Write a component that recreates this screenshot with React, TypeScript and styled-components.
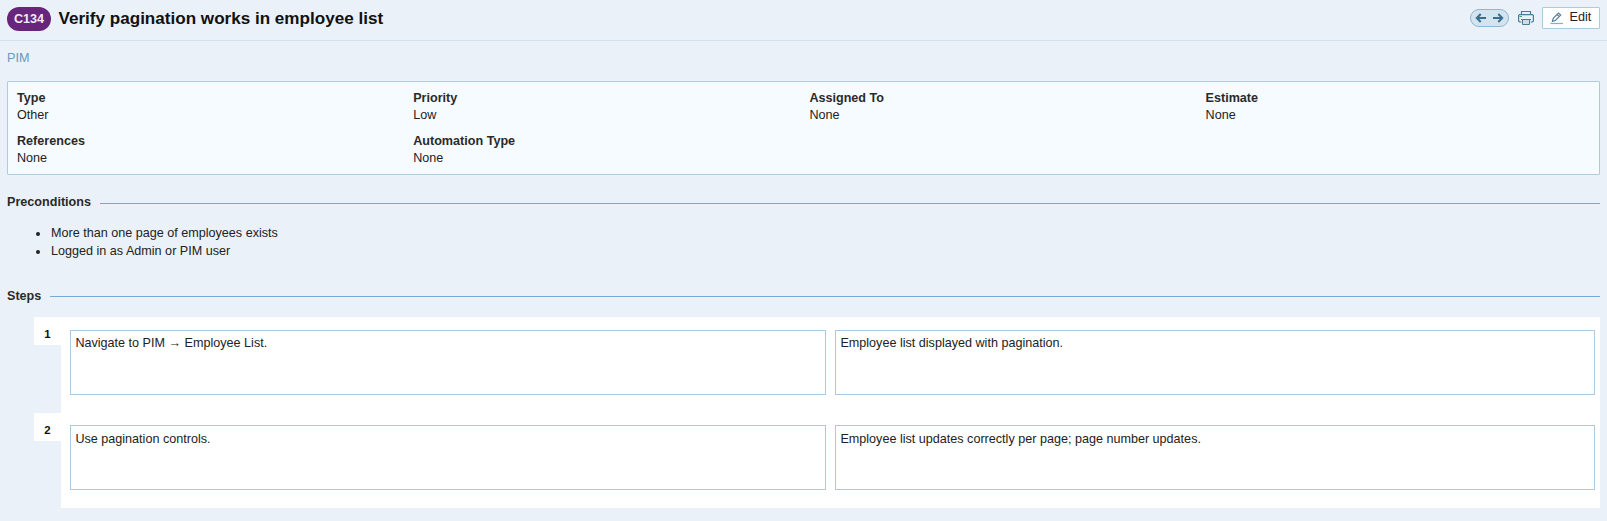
import React from 'react';
import styled, { createGlobalStyle } from 'styled-components';

const GlobalStyle = createGlobalStyle`
  * { box-sizing: border-box; }
  body {
    margin: 0;
    background: #eaf1f8;
    color: #222;
    font-family: "Liberation Sans", Arial, sans-serif;
    font-size: 12.6px;
    line-height: 17px;
  }
`;

const Page = styled.div`
  height: 521px;
  overflow: hidden;
`;

const Header = styled.header`
  display: flex;
  align-items: flex-start;
  height: 41px;
  padding: 7px 7px 0;
  border-bottom: 1px solid #cfe1ec;
`;

const CaseId = styled.span`
  width: 44px;
  height: 24px;
  border-radius: 12px;
  background: #67267c;
  color: #f3eaf5;
  font-size: 12.6px;
  font-weight: bold;
  line-height: 24px;
  text-align: center;
`;

const Title = styled.h1`
  flex: 1;
  margin: 1px 0 0 7.5px;
  color: #111;
  font-size: 17.08px;
  font-weight: bold;
  line-height: 22px;
`;

const Actions = styled.div`
  display: flex;
  align-items: flex-start;
`;

const Pager = styled.div`
  display: flex;
  width: 39px;
  height: 18px;
  margin: 2px 9px 0 0;
  border: 1px solid #8db7d3;
  border-radius: 9px;
  background: #d4e4ef;
`;

const PrintButton = styled.button`
  width: 16px;
  height: 16px;
  margin: 3px 8px 0 0;
  padding: 0;
  border: 0;
  background: none;
  svg { display: block; }
`;

const EditButton = styled.button`
  display: flex;
  width: 58px;
  height: 22px;
  padding: 0 0 0 6px;
  border: 1px solid #adcade;
  border-radius: 1px;
  background: #fff;
  color: #222;
  font: 12.6px/18px "Liberation Sans", Arial, sans-serif;
  svg { flex: none; margin: 4px 6.5px 0 0; }
`;

const Breadcrumb = styled.nav`
  height: 40px;
  padding: 9px 7px 0;
  color: #6699c2;
`;

const Properties = styled.section`
  display: grid;
  grid-template-columns: repeat(4, 396.2px);
  grid-auto-rows: 43px;
  height: 94px;
  margin: 0 7px;
  padding: 8px 0 0 9px;
  border: 1px solid #adcbdc;
  border-radius: 1px;
  background: #f6fbff;
`;

const Property = styled.div`
  display: flex;
  flex-direction: column;
`;

const Label = styled.strong`
  color: #2a2a2a;
`;

const SectionTitle = styled.h2<{ $top: number; $rule: number }>`
  display: flex;
  align-items: flex-start;
  gap: 9px;
  height: 17px;
  margin: ${(p) => p.$top}px 7px 0;
  color: #2a2a2a;
  font-size: 12.6px;
  font-weight: bold;
  &::after {
    content: "";
    flex: 1;
    height: 1px;
    margin-top: ${(p) => p.$rule}px;
    background: #75abd0;
  }
`;

const Conditions = styled.ul`
  height: 54px;
  margin: 13px 0 0;
  padding: 0 0 0 50px;
  line-height: 18px;
  li { padding-left: 1px; }
`;

const Steps = styled.section`
  display: flex;
  flex-direction: column;
  margin: 12px 7px 0 34px;
`;

const StepRow = styled.div<{ $height: number }>`
  display: flex;
  align-items: flex-start;
  height: ${(p) => p.$height}px;
`;

const StepNumber = styled.div`
  width: 27px;
  height: 28px;
  background: #fff;
  color: #111;
  font-size: 11.4px;
  font-weight: bold;
  line-height: 34px;
  text-align: center;
`;

const StepBody = styled.div<{ $top: number }>`
  display: grid;
  grid-template-columns: 756px 760px;
  gap: 9px;
  flex: 1;
  height: 100%;
  padding: ${(p) => p.$top}px 5px 0 9px;
  background: #fff;
`;

const StepCell = styled.div<{ $inset: number }>`
  height: 65px;
  padding: ${(p) => p.$inset}px 5px 0 4.4px;
  border: 1px solid #adcadf;
`;

const properties = [
  ['Type', 'Other'],
  ['Priority', 'Low'],
  ['Assigned To', 'None'],
  ['Estimate', 'None'],
  ['References', 'None'],
  ['Automation Type', 'None'],
];

const steps = [
  { action: 'Navigate to PIM → Employee List.', expected: 'Employee list displayed with pagination.', height: 96, top: 13, inset: 4 },
  { action: 'Use pagination controls.', expected: 'Employee list updates correctly per page; page number updates.', height: 95, top: 12, inset: 5 },
];

const ArrowsIcon = () => (
  <svg width="37" height="16" viewBox="0 0 37 16" fill="none" stroke="#386e91" strokeWidth="2">
    <path d="M15 8H6.500M9.700 4L5.800 8L9.700 12M22 8H30.500M27.300 4L31.200 8L27.300 12" />
  </svg>
);

const PrinterIcon = () => (
  <svg width="16" height="16" viewBox="0 0 16 16" fill="none" stroke="#4d7c9a">
    <path d="M3.500 4.500V1.500H12.500V4.500M3.500 12H1.500L0.600 11V5.500L1.500 4.600H14.500L15.400 5.500V11L14.500 12H12.500M3 9.500H13" strokeWidth="1.200" />
    <path d="M4.500 9.500V14.500H11.500V9.500Z" fill="#c9ddea" />
    <path d="M1.500 6.500H4" stroke="#35aa87" />
  </svg>
);

const PencilIcon = () => (
  <svg width="14" height="14" viewBox="0 0 14 14" fill="none" stroke="#55809c" strokeWidth="1.200">
    <path d="M3.400 9.300L4.200 6.300L9.500 1L11.700 3.100L6.400 8.500ZM8 2.500L10.200 4.600" />
    <path d="M1.500 11.500H14" stroke="#83b0cd" />
  </svg>
);

export default function App() {
  return (
    <Page>
      <GlobalStyle />
      <Header>
        <CaseId>C134</CaseId>
        <Title>Verify pagination works in employee list</Title>
        <Actions>
          <Pager><ArrowsIcon /></Pager>
          <PrintButton aria-label="Print"><PrinterIcon /></PrintButton>
          <EditButton><PencilIcon />Edit</EditButton>
        </Actions>
      </Header>
      <Breadcrumb>PIM</Breadcrumb>
      <Properties>
        {properties.map(([label, value]) => (
          <Property key={label}>
            <Label>{label}</Label>
            <span>{value}</span>
          </Property>
        ))}
      </Properties>
      <SectionTitle $top={19} $rule={9}>Preconditions</SectionTitle>
      <Conditions>
        <li>More than one page of employees exists</li>
        <li>Logged in as Admin or PIM user</li>
      </Conditions>
      <SectionTitle $top={10} $rule={8}>Steps</SectionTitle>
      <Steps>
        {steps.map((step, i) => (
          <StepRow key={step.action} $height={step.height}>
            <StepNumber>{i + 1}</StepNumber>
            <StepBody $top={step.top}>
              <StepCell $inset={step.inset}>{step.action}</StepCell>
              <StepCell $inset={step.inset}>{step.expected}</StepCell>
            </StepBody>
          </StepRow>
        ))}
      </Steps>
    </Page>
  );
}
